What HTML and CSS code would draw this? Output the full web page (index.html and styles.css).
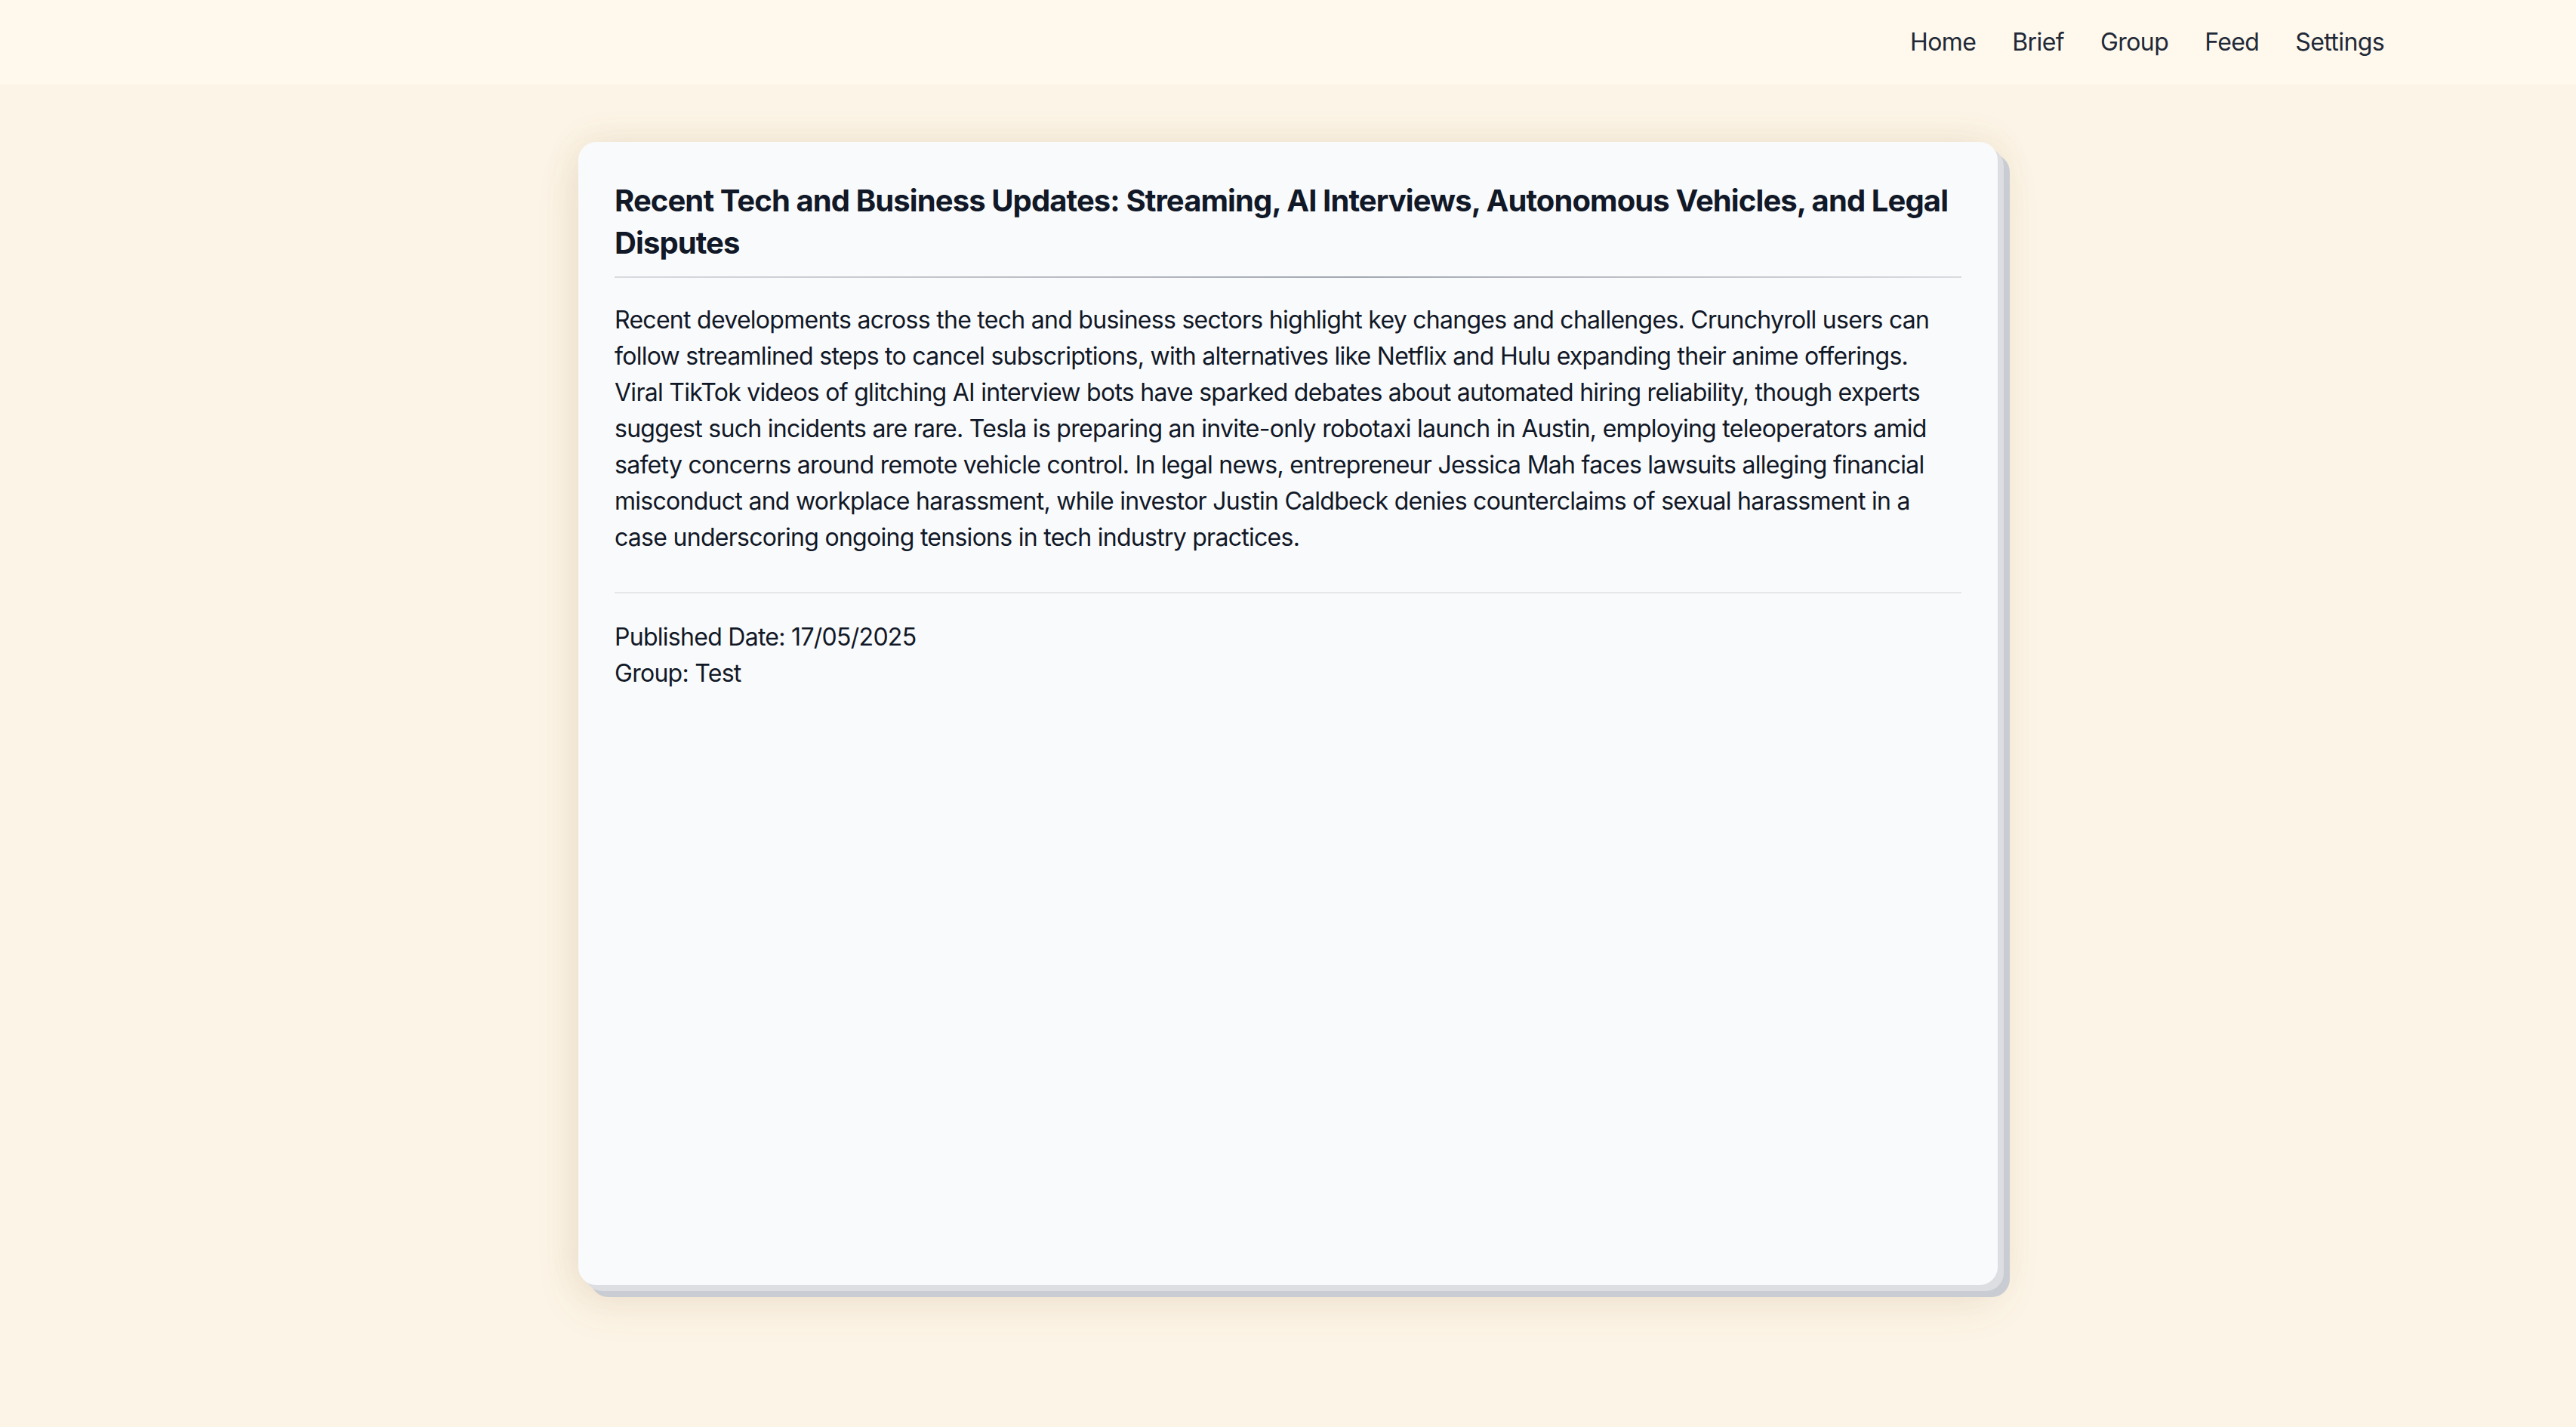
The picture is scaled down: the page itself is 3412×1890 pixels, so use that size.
FILE: index.html
```html
<!DOCTYPE html>
<html lang="en">
<head>
<meta charset="utf-8">
<title>Brief</title>
<link rel="stylesheet" href="styles.css">
</head>
<body>
<header class="topbar">
  <nav class="nav">
    <a class="nav-link" href="#">Home</a>
    <a class="nav-link" href="#">Brief</a>
    <a class="nav-link" href="#">Group</a>
    <a class="nav-link" href="#">Feed</a>
    <a class="nav-link" href="#">Settings</a>
  </nav>
</header>
<main class="main">
  <article class="card">
    <h1 class="title">Recent Tech and Business Updates: Streaming, AI Interviews, Autonomous Vehicles, and Legal Disputes</h1>
    <div class="title-rule"></div>
    <p class="summary">Recent developments across the tech and business sectors highlight key changes and challenges. Crunchyroll users can follow streamlined steps to cancel subscriptions, with alternatives like Netflix and Hulu expanding their anime offerings. Viral TikTok videos of glitching AI interview bots have sparked debates about automated hiring reliability, though experts suggest such incidents are rare. Tesla is preparing an invite-only robotaxi launch in Austin, employing teleoperators amid safety concerns around remote vehicle control. In legal news, entrepreneur Jessica Mah faces lawsuits alleging financial misconduct and workplace harassment, while investor Justin Caldbeck denies counterclaims of sexual harassment in a case underscoring ongoing tensions in tech industry practices.</p>
    <div class="meta">
      <p class="meta-line">Published Date: 17/05/2025</p>
      <p class="meta-line">Group: Test</p>
    </div>
  </article>
</main>
</body>
</html>
```

FILE: styles.css
```css
html, body {
  margin: 0;
  padding: 0;
}

body {
  background: #fcf4e6;
  font-family: Inter, "Noto Sans", "Liberation Sans", sans-serif;
  color: #111827;
  min-height: 1890px;
}

.topbar {
  background: #fef8ed;
  height: 112px;
  display: flex;
  align-items: center;
  justify-content: flex-end;
  padding-right: 254px;
}

.nav {
  display: flex;
  gap: 48px;
}

.nav-link {
  font-size: 32px;
  line-height: 48px;
  color: #1f2937;
  text-decoration: none;
  letter-spacing: -0.6px;
}

.main {
  display: flex;
  justify-content: center;
  padding-top: 76px;
}

.card {
  box-sizing: border-box;
  width: 1880px;
  height: 1514px;
  padding: 48px;
  background: #f9fafb;
  border-radius: 24px;
  box-shadow:
    8px 8px 0 #dcdee2,
    16px 16px 0 #c9ccd2,
    0 0 48px rgba(140, 100, 40, 0.10),
    0 24px 60px rgba(140, 100, 40, 0.10);
}

.title {
  margin: 0;
  padding-top: 2px;
  font-size: 40px;
  line-height: 56px;
  font-weight: 700;
  color: #111827;
  letter-spacing: -0.9px;
}

.title-rule {
  height: 2px;
  margin-top: 16px;
  background: linear-gradient(to right, #dadbe0, #a3a7b1 55%, #dadbe0);
}

.summary {
  margin: 32px 0 0 0;
  font-size: 32px;
  line-height: 48px;
  color: #111827;
  letter-spacing: -0.72px;
}

.meta {
  margin-top: 48px;
  border-top: 2px solid #e5e7eb;
  padding-top: 34px;
}

.meta-line {
  margin: 0;
  font-size: 32px;
  line-height: 48px;
  color: #111827;
  letter-spacing: -0.72px;
}
```
